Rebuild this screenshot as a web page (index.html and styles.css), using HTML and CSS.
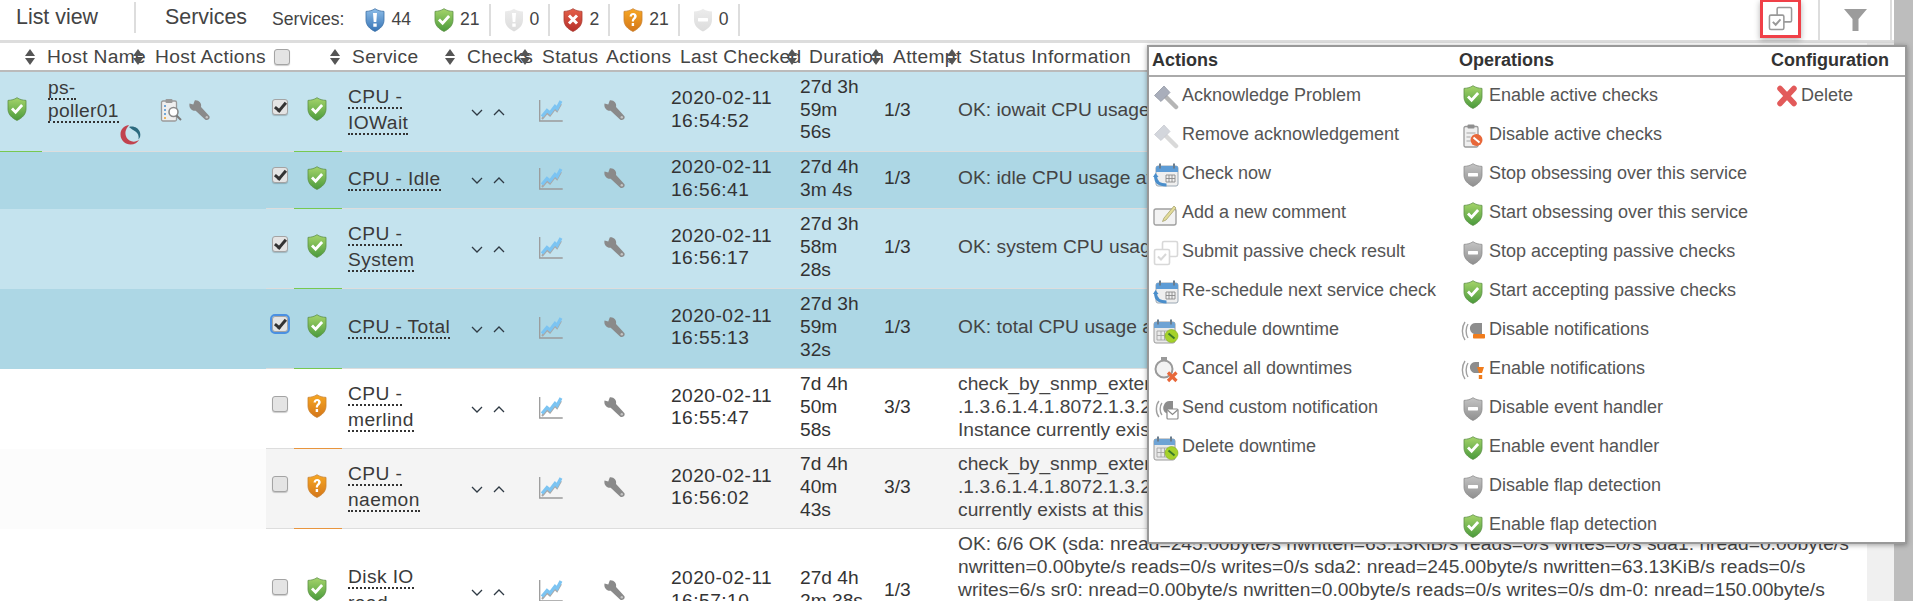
FILE: index.html
```html
<!DOCTYPE html>
<html>
<head>
  <meta charset="UTF-8">
  <title>List view - Services</title>
  <link rel="stylesheet" href="styles.css">
</head>
<body>
  <!-- shared icons -->
  <svg class="defs" aria-hidden="true">
    <defs>
      <linearGradient id="g-green" x1="0" y1="0" x2="0" y2="1"><stop offset="0" stop-color="#a5d46a"/><stop offset="1" stop-color="#4a9a3c"/></linearGradient>
      <linearGradient id="g-blue" x1="0" y1="0" x2="0" y2="1"><stop offset="0" stop-color="#8dbde8"/><stop offset="1" stop-color="#3673b5"/></linearGradient>
      <linearGradient id="g-red" x1="0" y1="0" x2="0" y2="1"><stop offset="0" stop-color="#e5604a"/><stop offset="1" stop-color="#b62f2a"/></linearGradient>
      <linearGradient id="g-orange" x1="0" y1="0" x2="0" y2="1"><stop offset="0" stop-color="#f7a823"/><stop offset="1" stop-color="#d4761a"/></linearGradient>
      <linearGradient id="g-grey" x1="0" y1="0" x2="0" y2="1"><stop offset="0" stop-color="#c4c4c4"/><stop offset="1" stop-color="#8f8f8f"/></linearGradient>
      <linearGradient id="g-pale" x1="0" y1="0" x2="0" y2="1"><stop offset="0" stop-color="#ececec"/><stop offset="1" stop-color="#dcdcdc"/></linearGradient>
    </defs>
    <symbol id="s-green" viewBox="0 0 20 24">
      <path d="M10 .7C7.500 2.500 4.500 3.200 1 3.400V12c0 5 3.500 9 9 11.400 5.500-2.400 9-6.400 9-11.400V3.400C15.500 3.200 12.500 2.500 10 .7z" fill="url(#g-green)" stroke="#5c8f44" stroke-width=".8"/>
      <path d="M5 11.500l3.600 3.700 6.500-7.200" fill="none" stroke="#fff" stroke-width="2.800"/>
    </symbol>
    <symbol id="s-blue" viewBox="0 0 20 24">
      <path d="M10 .7C7.500 2.500 4.500 3.200 1 3.400V12c0 5 3.500 9 9 11.400 5.500-2.400 9-6.400 9-11.400V3.400C15.500 3.200 12.500 2.500 10 .7z" fill="url(#g-blue)" stroke="#3a6ea5" stroke-width=".8"/>
      <path d="M8 5h4l-.7 9H8.700zM8.300 15.500h3.400v3.200H8.300z" fill="#fff"/>
    </symbol>
    <symbol id="s-ghost" viewBox="0 0 20 24">
      <path d="M10 .7C7.500 2.500 4.500 3.200 1 3.400V12c0 5 3.500 9 9 11.400 5.500-2.400 9-6.400 9-11.400V3.400C15.500 3.200 12.500 2.500 10 .7z" fill="url(#g-pale)"/>
      <path d="M8 5h4l-.7 9H8.700zM8.300 15.500h3.400v3.200H8.300z" fill="#fff"/>
    </symbol>
    <symbol id="s-red" viewBox="0 0 20 24">
      <path d="M10 .7C7.500 2.500 4.500 3.200 1 3.400V12c0 5 3.500 9 9 11.400 5.500-2.400 9-6.400 9-11.400V3.400C15.500 3.200 12.500 2.500 10 .7z" fill="url(#g-red)" stroke="#a83a30" stroke-width=".8"/>
      <path d="M6 7.500l8 8M14 7.500l-8 8" fill="none" stroke="#fff" stroke-width="3"/>
    </symbol>
    <symbol id="s-orange" viewBox="0 0 20 24">
      <path d="M10 .7C7.500 2.500 4.500 3.200 1 3.400V12c0 5 3.500 9 9 11.400 5.500-2.400 9-6.400 9-11.400V3.400C15.500 3.200 12.500 2.500 10 .7z" fill="url(#g-orange)" stroke="#c9812e" stroke-width=".8"/>
      <path d="M6.500 8.500C6.800 6 8.500 5 10.200 5c2.200 0 3.500 1.400 3.500 3.200 0 2.600-2.800 2.800-2.800 5.300H8.800c0-3.200 2.300-3.400 2.300-5.200 0-.7-.4-1.200-1-1.200-.7 0-1 .5-1.100 1.400zM8.700 15h2.400v3h-2.400z" fill="#fff"/>
    </symbol>
    <symbol id="s-grey" viewBox="0 0 20 24">
      <path d="M10 .7C7.500 2.500 4.500 3.200 1 3.400V12c0 5 3.500 9 9 11.400 5.500-2.400 9-6.400 9-11.400V3.400C15.500 3.200 12.500 2.500 10 .7z" fill="url(#g-grey)" stroke="#8a8a8a" stroke-width=".8"/>
      <rect x="5" y="10" width="10" height="3.400" rx=".6" fill="#fff"/>
    </symbol>
    <symbol id="s-pale" viewBox="0 0 20 24">
      <path d="M10 .7C7.500 2.500 4.500 3.200 1 3.400V12c0 5 3.500 9 9 11.400 5.500-2.400 9-6.400 9-11.400V3.400C15.500 3.200 12.500 2.500 10 .7z" fill="url(#g-pale)"/>
      <rect x="5" y="10" width="10" height="3.400" rx=".6" fill="#fff"/>
    </symbol>
    <symbol id="i-wrench" viewBox="0 0 24 24">
      <path d="M7 1.500L5.500 5.800 1.600 4.600C.6 8.600 3.600 12.600 8 12.200L17.800 21.300C19.300 22.700 22.600 21.700 22.600 19 22.600 18 22 17.400 21 16.400L13.600 8.300C14.600 4.300 11 .8 7 1.500z" fill="#8a8a8a"/>
      <circle cx="19.600" cy="19" r="1.300" fill="#c4c4c4"/>
    </symbol>
    <symbol id="i-graph" viewBox="0 0 24 23">
      <path d="M.7 1v21h23" fill="none" stroke="#9a9a9a" stroke-width="1.300"/>
      <path d="M3 20l5-6 3 2.500 5-6.500 2 2 4-7" fill="none" stroke="#a8a8a8" stroke-width="2"/>
      <path d="M3 17.500l5-6 3 2.500 5-6.500 2 2 4-7.500" fill="none" stroke="#7cc4f2" stroke-width="3.200"/>
    </symbol>
    <symbol id="i-down" viewBox="0 0 12 7"><path d="M1 1l5 5 5-5" fill="none" stroke="#2f3a44" stroke-width="1.300"/></symbol>
    <symbol id="i-up" viewBox="0 0 12 7"><path d="M1 6l5-5 5 5" fill="none" stroke="#2f3a44" stroke-width="1.300"/></symbol>
    <symbol id="i-report" viewBox="0 0 22 24">
      <rect x="1" y="3" width="15" height="20" rx="1.500" fill="#efefef" stroke="#9a9a9a" stroke-width="1.300"/>
      <rect x="5" y="1" width="7" height="4" rx="1" fill="#9a9a9a"/>
      <path d="M3.500 8h2M3.500 12h2M3.500 16h2" stroke="#4a90d0" stroke-width="1.500"/>
      <path d="M3.500 20h2" stroke="#e8a030" stroke-width="1.500"/>
      <circle cx="13" cy="14" r="4.500" fill="#fff" stroke="#8a8a8a" stroke-width="1.600"/>
      <path d="M16 17.500l4.500 4.500" stroke="#7a7a7a" stroke-width="2"/>
    </symbol>
    <symbol id="i-spinner" viewBox="0 0 21 21">
      <path d="M9 1C3 2 .5 6 .5 10.500c0 6 5 10 10 10 4 0 7-2 9-5-3 2.500-7 2.800-10 1-3.500-2-5-7-3.500-10.500C6.800 4 8 2.500 9 1z" fill="#c1434f"/>
      <path d="M9 3c4-1.500 9.500.500 11 5.500.8 3 .2 5-1.500 7 .7-3.500-.5-6.500-3-8C13.500 6 11 5 9 3z" fill="#2c6a7e"/>
    </symbol>
    <symbol id="i-hammer" viewBox="0 0 26 26">
      <path d="M11 11l12 12" stroke="#b5b5b5" stroke-width="4.500" stroke-linecap="round"/>
      <path d="M1.500 11.500L11 2l6 6.500L8 17.500z" fill="#a9aebb" stroke="#9398a5" stroke-width=".8"/>
    </symbol>
    <symbol id="i-cal-refresh" viewBox="0 0 26 26">
      <rect x="3" y="4" width="22" height="20" rx="2" fill="#efefef" stroke="#9aa7b3"/>
      <path d="M3 6a2 2 0 0 1 2-2h18a2 2 0 0 1 2 2v4H3z" fill="#5d9cd6"/>
      <path d="M7 1.500v5M21 1.500v5" stroke="#6a7d8e" stroke-width="2"/>
      <path d="M13 13h9v7h-9zM16 13v7M19 13v7M13 16.500h9" fill="none" stroke="#8a8a8a" stroke-width=".9"/>
      <path d="M2.500 14c0 6 4 9 11 9" fill="none" stroke="#4a8ecb" stroke-width="3"/>
      <path d="M0 15l2.500-4 3 4z" fill="#4a8ecb"/>
    </symbol>
    <symbol id="i-comment" viewBox="0 0 26 26">
      <rect x="1" y="8" width="22" height="16" rx="2" fill="#f3f3f3" stroke="#a0a0a0" stroke-width="1.400"/>
      <path d="M11 17l-1.500 3.500 3.500-1.500L23 7l-2-2z" fill="#e3dc9a" stroke="#a8a470" stroke-width=".8"/>
    </symbol>
    <symbol id="i-stack" viewBox="0 0 26 26">
      <rect x="9.500" y="1.500" width="15" height="15" rx="1.500" fill="none" stroke="currentColor" stroke-width="1.600"/>
      <rect x="1.500" y="9.500" width="15" height="15" rx="1.500" fill="#fff" stroke="currentColor" stroke-width="1.600"/>
      <path d="M5 16.500l3 3 5-5.500" fill="none" stroke="currentColor" stroke-width="2"/>
    </symbol>
    <symbol id="i-cal-down" viewBox="0 0 26 26">
      <rect x="1" y="4" width="21" height="21" rx="2" fill="#e9e9e9" stroke="#9a9a9a"/>
      <path d="M1 6a2 2 0 0 1 2-2h17a2 2 0 0 1 2 2v4H1z" fill="#6ea3d4"/>
      <path d="M5 1.500v5M18 1.500v5" stroke="#6a7d8e" stroke-width="2"/>
      <path d="M4 13h11v9H4zM8 13v9M11.500 13v9M4 17.500h11" fill="none" stroke="#a5a5a5" stroke-width=".9"/>
      <circle cx="18.500" cy="18" r="6.500" fill="#a5d22a" stroke="#86ad20" stroke-width=".6"/>
      <path d="M15.500 15.500l6 5" stroke="#3b7a2a" stroke-width="2"/>
    </symbol>
    <symbol id="i-watch-x" viewBox="0 0 26 26">
      <circle cx="11" cy="12" r="8.500" fill="#f3f3f3" stroke="#9a9a9a" stroke-width="2"/>
      <rect x="8" y="0" width="6" height="3" fill="#9a9a9a"/>
      <path d="M15 15.500l8.500 8.500M23.500 15.500L15 24" stroke="#e8683a" stroke-width="3.200"/>
    </symbol>
    <symbol id="i-bell-mail" viewBox="0 0 26 26">
      <path d="M6 5C2.500 9 2.500 17 6 21M9 7C6.500 10 6.500 16 9 19" fill="none" stroke="#a0a0a0" stroke-width="1.400"/>
      <path d="M11 9a6 6 0 0 1 6-4h3v13h-4a6 6 0 0 1-5-9z" fill="#8d8d8d"/>
      <rect x="14" y="13" width="11" height="10" rx="1" fill="#fff" stroke="#8a8a8a" stroke-width="1.200"/>
      <path d="M14.500 14l5 4.500 5-4.500" fill="none" stroke="#8a8a8a" stroke-width="1.200"/>
    </symbol>
    <symbol id="i-bell-off" viewBox="0 0 26 26">
      <path d="M5 4C1.500 9 1.500 17 5 22M8 6C5.500 10 5.500 16 8 20" fill="none" stroke="#a0a0a0" stroke-width="1.400"/>
      <path d="M10 9a6 6 0 0 1 6-4h6v11h-8a6 6 0 0 1-4-7z" fill="#8d8d8d"/>
      <rect x="13" y="16" width="12" height="4.500" rx=".8" fill="#f07c1c"/>
    </symbol>
    <symbol id="i-bell-on" viewBox="0 0 26 26">
      <path d="M5 4C1.500 9 1.500 17 5 22M8 6C5.500 10 5.500 16 8 20" fill="none" stroke="#a0a0a0" stroke-width="1.400"/>
      <path d="M10 9a6 6 0 0 1 6-4h3v11h-5a6 6 0 0 1-4-7z" fill="#8d8d8d"/>
      <path d="M17 10h7l-2 6h-3zM18.800 18h3.400v4h-3.400z" fill="#f07c1c"/>
    </symbol>
    <symbol id="i-clip-no" viewBox="0 0 20 24">
      <rect x="1" y="2.500" width="14" height="20.500" rx="1.500" fill="#efefef" stroke="#9a9a9a" stroke-width="1.300"/>
      <rect x="4.500" y=".5" width="7" height="4" rx="1" fill="#8f8f8f"/>
      <path d="M3.500 9h9M3.500 13h4M3.500 17h4" stroke="#a5a5a5" stroke-width="1.200"/>
      <circle cx="13.500" cy="16" r="6" fill="#e8683a"/>
      <path d="M10.500 13.500l6 5" stroke="#fff" stroke-width="2"/>
    </symbol>
    <symbol id="i-delete" viewBox="0 0 20 22">
      <path d="M3 3.500l14 15M17 3.500l-14 15" stroke="#e25a5a" stroke-width="5.500" stroke-linecap="round"/>
    </symbol>
    <symbol id="i-filter" viewBox="0 0 23 22">
      <path d="M0 0h23l-8.500 10v12h-6V10z" fill="#9c9c9c"/>
    </symbol>
  </svg>

  <div class="page">
    <div class="main">
      <div class="bar">
        <span class="bar-title">List view</span>
        <span class="bar-sub">Services</span>
        <span class="bar-label">Services:</span>
        <span class="count count-plain"><svg class="shield"><use href="#s-blue"/></svg>44</span>
        <span class="count"><svg class="shield"><use href="#s-green"/></svg>21</span>
        <span class="count"><svg class="shield"><use href="#s-ghost"/></svg>0</span>
        <span class="count"><svg class="shield"><use href="#s-red"/></svg>2</span>
        <span class="count"><svg class="shield"><use href="#s-orange"/></svg>21</span>
        <span class="count"><svg class="shield"><use href="#s-pale"/></svg>0</span>
        <div class="tools">
          <div class="bulk-btn"><svg class="bulk-icon"><use href="#i-stack"/></svg></div>
          <div class="filter-btn"><svg class="filter-icon"><use href="#i-filter"/></svg></div>
        </div>
      </div>

      <div class="list">
        <table class="services">
          <colgroup>
            <col class="c-state"><col class="c-host"><col class="c-hostact"><col class="c-sel"><col class="c-svcstate"><col class="c-svc"><col class="c-checks"><col class="c-status"><col class="c-act"><col class="c-last"><col class="c-dur"><col class="c-att"><col class="c-info">
          </colgroup>
          <thead>
            <tr>
              <th></th>
              <th class="th-5"><span class="sort">Host Name</span></th>
              <th class="th-5"><span class="sort">Host Actions</span></th>
              <th class="th-sel"><input type="checkbox" class="cb"></th>
              <th></th>
              <th class="th-10"><span class="sort">Service</span></th>
              <th class="th-7"><span class="sort">Checks</span></th>
              <th class="th-12"><span class="sort">Status</span></th>
              <th class="th-11">Actions</th>
              <th class="th-15">Last Checked</th>
              <th class="th-14"><span class="sort">Duration</span></th>
              <th class="th-13"><span class="sort">Attempt</span></th>
              <th class="th-19"><span class="sort">Status Information</span></th>
            </tr>
          </thead>
          <tbody>
            <tr class="sel-odd">
              <td class="state ok"><svg class="shield"><use href="#s-green"/></svg></td>
              <td class="host"><a class="link">ps-<br>poller01</a><svg class="spinner"><use href="#i-spinner"/></svg></td>
              <td class="hostact"><svg class="report"><use href="#i-report"/></svg><svg class="wrench"><use href="#i-wrench"/></svg></td>
              <td class="sel"><input type="checkbox" class="cb" checked></td>
              <td class="svcstate ok"><svg class="shield"><use href="#s-green"/></svg></td>
              <td class="svc"><a class="link">CPU -<br>IOWait</a></td>
              <td class="checks"><svg class="chev"><use href="#i-down"/></svg><svg class="chev"><use href="#i-up"/></svg></td>
              <td class="status"><svg class="graph"><use href="#i-graph"/></svg></td>
              <td class="act"><svg class="wrench"><use href="#i-wrench"/></svg></td>
              <td class="last">2020-02-11<br>16:54:52</td>
              <td class="dur">27d 3h<br>59m<br>56s</td>
              <td class="att">1/3</td>
              <td class="info">OK: iowait CPU usage at 0.00%</td>
            </tr>
            <tr class="sel-even">
              <td class="blank"></td><td class="blank"></td><td class="blank"></td>
              <td class="sel"><input type="checkbox" class="cb" checked></td>
              <td class="svcstate ok"><svg class="shield"><use href="#s-green"/></svg></td>
              <td class="svc"><a class="link">CPU - Idle</a></td>
              <td class="checks"><svg class="chev"><use href="#i-down"/></svg><svg class="chev"><use href="#i-up"/></svg></td>
              <td class="status"><svg class="graph"><use href="#i-graph"/></svg></td>
              <td class="act"><svg class="wrench"><use href="#i-wrench"/></svg></td>
              <td class="last">2020-02-11<br>16:56:41</td>
              <td class="dur">27d 4h<br>3m 4s</td>
              <td class="att">1/3</td>
              <td class="info">OK: idle CPU usage at 97.00%</td>
            </tr>
            <tr class="sel-odd">
              <td class="blank"></td><td class="blank"></td><td class="blank"></td>
              <td class="sel"><input type="checkbox" class="cb" checked></td>
              <td class="svcstate ok"><svg class="shield"><use href="#s-green"/></svg></td>
              <td class="svc"><a class="link">CPU -<br>System</a></td>
              <td class="checks"><svg class="chev"><use href="#i-down"/></svg><svg class="chev"><use href="#i-up"/></svg></td>
              <td class="status"><svg class="graph"><use href="#i-graph"/></svg></td>
              <td class="act"><svg class="wrench"><use href="#i-wrench"/></svg></td>
              <td class="last">2020-02-11<br>16:56:17</td>
              <td class="dur">27d 3h<br>58m<br>28s</td>
              <td class="att">1/3</td>
              <td class="info">OK: system CPU usage at 1.00%</td>
            </tr>
            <tr class="sel-even">
              <td class="blank"></td><td class="blank"></td><td class="blank"></td>
              <td class="sel"><input type="checkbox" class="cb cb-focus" checked></td>
              <td class="svcstate ok"><svg class="shield"><use href="#s-green"/></svg></td>
              <td class="svc"><a class="link">CPU - Total</a></td>
              <td class="checks"><svg class="chev"><use href="#i-down"/></svg><svg class="chev"><use href="#i-up"/></svg></td>
              <td class="status"><svg class="graph"><use href="#i-graph"/></svg></td>
              <td class="act"><svg class="wrench"><use href="#i-wrench"/></svg></td>
              <td class="last">2020-02-11<br>16:55:13</td>
              <td class="dur">27d 3h<br>59m<br>32s</td>
              <td class="att">1/3</td>
              <td class="info">OK: total CPU usage at 3.00%</td>
            </tr>
            <tr>
              <td class="blank white"></td><td class="blank white"></td><td class="blank white"></td>
              <td class="sel"><input type="checkbox" class="cb"></td>
              <td class="svcstate warn"><svg class="shield"><use href="#s-orange"/></svg></td>
              <td class="svc"><a class="link">CPU -<br>merlind</a></td>
              <td class="checks"><svg class="chev"><use href="#i-down"/></svg><svg class="chev"><use href="#i-up"/></svg></td>
              <td class="status"><svg class="graph"><use href="#i-graph"/></svg></td>
              <td class="act"><svg class="wrench"><use href="#i-wrench"/></svg></td>
              <td class="last">2020-02-11<br>16:55:47</td>
              <td class="dur">7d 4h<br>50m<br>58s</td>
              <td class="att">3/3</td>
              <td class="info">check_by_snmp_extend:<br>.1.3.6.1.4.1.8072.1.3.2.3<br>Instance currently exists</td>
            </tr>
            <tr class="grey">
              <td class="blank faint"></td><td class="blank faint"></td><td class="blank faint"></td>
              <td class="sel"><input type="checkbox" class="cb"></td>
              <td class="svcstate warn"><svg class="shield"><use href="#s-orange"/></svg></td>
              <td class="svc"><a class="link">CPU -<br>naemon</a></td>
              <td class="checks"><svg class="chev"><use href="#i-down"/></svg><svg class="chev"><use href="#i-up"/></svg></td>
              <td class="status"><svg class="graph"><use href="#i-graph"/></svg></td>
              <td class="act"><svg class="wrench"><use href="#i-wrench"/></svg></td>
              <td class="last">2020-02-11<br>16:56:02</td>
              <td class="dur">7d 4h<br>40m<br>43s</td>
              <td class="att">3/3</td>
              <td class="info">check_by_snmp_extend:<br>.1.3.6.1.4.1.8072.1.3.2.3<br>currently exists at this OID</td>
            </tr>
            <tr>
              <td class="blank white"></td><td class="blank white"></td><td class="blank white"></td>
              <td class="sel"><input type="checkbox" class="cb"></td>
              <td class="svcstate ok"><svg class="shield"><use href="#s-green"/></svg></td>
              <td class="svc"><a class="link">Disk IO<br>read</a></td>
              <td class="checks"><svg class="chev"><use href="#i-down"/></svg><svg class="chev"><use href="#i-up"/></svg></td>
              <td class="status"><svg class="graph"><use href="#i-graph"/></svg></td>
              <td class="act"><svg class="wrench"><use href="#i-wrench"/></svg></td>
              <td class="last">2020-02-11<br>16:57:10</td>
              <td class="dur">27d 4h<br>2m 38s</td>
              <td class="att">1/3</td>
              <td class="info">OK: 6/6 OK (sda: nread=245.00byte/s nwritten=63.13KiB/s reads=0/s writes=0/s sda1: nread=0.00byte/s<br>nwritten=0.00byte/s reads=0/s writes=0/s sda2: nread=245.00byte/s nwritten=63.13KiB/s reads=0/s<br>writes=6/s sr0: nread=0.00byte/s nwritten=0.00byte/s reads=0/s writes=0/s dm-0: nread=150.00byte/s<br>nwritten=63.13KiB/s reads=0/s writes=6/s<br>dm-1: nread=0.00byte/s</td>
            </tr>
          </tbody>
        </table>
      </div>
    </div>
    <div class="scroll"></div>

    <!-- bulk command menu -->
    <div class="menu">
      <div class="menu-col">
        <div class="menu-head">Actions</div>
        <div class="item"><svg class="ico"><use href="#i-hammer"/></svg>Acknowledge Problem</div>
        <div class="item"><svg class="ico faded"><use href="#i-hammer"/></svg>Remove acknowledgement</div>
        <div class="item"><svg class="ico"><use href="#i-cal-refresh"/></svg>Check now</div>
        <div class="item"><svg class="ico"><use href="#i-comment"/></svg>Add a new comment</div>
        <div class="item"><svg class="ico stack-pale"><use href="#i-stack"/></svg>Submit passive check result</div>
        <div class="item"><svg class="ico"><use href="#i-cal-refresh"/></svg>Re-schedule next service check</div>
        <div class="item"><svg class="ico"><use href="#i-cal-down"/></svg>Schedule downtime</div>
        <div class="item"><svg class="ico"><use href="#i-watch-x"/></svg>Cancel all downtimes</div>
        <div class="item"><svg class="ico"><use href="#i-bell-mail"/></svg>Send custom notification</div>
        <div class="item"><svg class="ico"><use href="#i-cal-down"/></svg>Delete downtime</div>
      </div>
      <div class="menu-col ops">
        <div class="menu-head">Operations</div>
        <div class="item"><svg class="ico-shield"><use href="#s-green"/></svg>Enable active checks</div>
        <div class="item"><svg class="ico-shield"><use href="#i-clip-no"/></svg>Disable active checks</div>
        <div class="item"><svg class="ico-shield"><use href="#s-grey"/></svg>Stop obsessing over this service</div>
        <div class="item"><svg class="ico-shield"><use href="#s-green"/></svg>Start obsessing over this service</div>
        <div class="item"><svg class="ico-shield"><use href="#s-grey"/></svg>Stop accepting passive checks</div>
        <div class="item"><svg class="ico-shield"><use href="#s-green"/></svg>Start accepting passive checks</div>
        <div class="item"><svg class="ico-bell"><use href="#i-bell-off"/></svg>Disable notifications</div>
        <div class="item"><svg class="ico-bell"><use href="#i-bell-on"/></svg>Enable notifications</div>
        <div class="item"><svg class="ico-shield"><use href="#s-grey"/></svg>Disable event handler</div>
        <div class="item"><svg class="ico-shield"><use href="#s-green"/></svg>Enable event handler</div>
        <div class="item"><svg class="ico-shield"><use href="#s-grey"/></svg>Disable flap detection</div>
        <div class="item"><svg class="ico-shield"><use href="#s-green"/></svg>Enable flap detection</div>
      </div>
      <div class="menu-col conf">
        <div class="menu-head">Configuration</div>
        <div class="item"><svg class="ico-del"><use href="#i-delete"/></svg>Delete</div>
      </div>
    </div>
  </div>
</body>
</html>
```
FILE: styles.css
```css
html, body {
  margin: 0;
  height: 601px;
  overflow: hidden;
  background: #fff;
}
body {
  font-family: "Liberation Sans", Arial, sans-serif;
  color: #333;
}
.defs {
  position: absolute;
  width: 0;
  height: 0;
}
.page {
  position: relative;
  display: flex;
  height: 601px;
  overflow: hidden;
}
.main {
  width: 1894px;
  flex: none;
}
.scroll {
  flex: 1;
  background: #bdbdbd;
}

/* top bar */
.bar {
  display: flex;
  align-items: center;
  height: 40px;
  border-bottom: 3px solid #ddd;
  color: #444;
}
.bar-title {
  font-size: 21.4px;
  padding: 0 36px 0 16px;
  border-right: 2px solid #ddd;
  line-height: 31px;
  margin-top: -6px;
}
.bar-sub {
  font-size: 21.4px;
  margin: -6px 25px 0 29px;
}
.bar-label {
  font-size: 17.6px;
  margin: -1px 21px 0 0;
}
.count {
  display: flex;
  align-items: center;
  gap: 6px;
  height: 32px;
  font-size: 17.6px;
  padding-right: 9px;
  margin-right: 13px;
  margin-top: -1px;
  border-right: 2px solid #ddd;
}
.count-plain {
  border-right: 0;
  padding-right: 0;
  margin-right: 23px;
}
.shield {
  display: block;
  width: 20px;
  height: 24px;
  flex: none;
}
.tools {
  display: flex;
  align-self: flex-start;
  margin-left: auto;
  margin-right: 2px;
}
.bulk-btn {
  display: flex;
  align-items: center;
  justify-content: center;
  box-sizing: border-box;
  width: 41px;
  height: 38px;
  margin-right: 17px;
  border: 3px solid #f04048;
  border-top-width: 2px;
  box-shadow: 0 2px 6px rgba(0, 0, 0, .3);
  color: #999;
}
.bulk-icon {
  width: 25px;
  height: 25px;
}
.filter-btn {
  display: flex;
  align-items: center;
  justify-content: center;
  box-sizing: border-box;
  width: 74px;
  height: 40px;
  border-left: 2px solid #ddd;
  border-right: 2px solid #ddd;
}
.filter-icon {
  width: 23px;
  height: 22px;
}

/* service list */
.list {
  background: #f0f0f0;
  height: 558px;
}
.services {
  width: 1867px;
  table-layout: fixed;
  border-collapse: separate;
  border-spacing: 0;
  background: #fff;
  font-size: 19.2px;
  line-height: 22.67px;
}
.c-state { width: 42px; }
.c-host { width: 108px; }
.c-hostact { width: 116px; }
.c-sel { width: 28px; }
.c-svcstate { width: 48px; }
.c-svc { width: 118px; }
.c-checks { width: 70px; }
.c-status { width: 65px; }
.c-act { width: 70px; }
.c-last { width: 130px; }
.c-dur { width: 85px; }
.c-att { width: 70px; }
.services th {
  height: 25px;
  padding: 2px 0 0;
  text-align: left;
  font-weight: normal;
  white-space: nowrap;
  letter-spacing: .35px;
  color: #444;
  border-bottom: 2px solid #bbb;
}
.th-5 { padding-left: 5px !important; }
.th-7 { padding-left: 7px !important; }
.th-10 { padding-left: 10px !important; }
.th-11 { padding-left: 11px !important; }
.th-12 { padding-left: 12px !important; }
.th-13 { padding-left: 13px !important; }
.th-14 { padding-left: 14px !important; }
.th-15 { padding-left: 15px !important; }
.th-19 { padding-left: 19px !important; }
.th-sel { padding-left: 8px !important; }
.th-sel .cb { margin-top: -1px; }
.sort {
  position: relative;
}
.sort::before,
.sort::after {
  content: "";
  position: absolute;
  left: -22px;
  border-left: 5px solid transparent;
  border-right: 5px solid transparent;
}
.sort::before {
  top: 3px;
  border-bottom: 7px solid #555;
}
.sort::after {
  top: 12px;
  border-top: 7px solid #555;
}
.services td {
  padding: 4px 0 7px;
  vertical-align: middle;
  white-space: nowrap;
  overflow: hidden;
  border-bottom: 1px solid #ddd;
}
.sel-odd { background: #c4e3ee; }
.sel-even { background: #add7e5; }
.grey { background: #f4f4f4; }
.services td.blank { border-bottom-color: transparent; }
.services td.white { background: #fff; }
.services td.faint { background: #fcfcfc; }
.services td.state { padding-left: 7px; }
.services td.ok { border-bottom-color: #78c850; }
.services td.warn { border-bottom-color: #e8953e; }
.services td.host {
  padding-left: 6px;
  vertical-align: top;
  overflow: visible;
  line-height: 23px;
  letter-spacing: .3px;
}
.link {
  border-bottom: 2px dotted #333;
  color: #3a3a3a;
}
.spinner {
  display: block;
  width: 21px;
  height: 21px;
  margin: 2px 0 -3px 72px;
}
.services td.hostact { padding-left: 10px; }
.report {
  width: 23px;
  height: 24px;
  margin-right: 5px;
  vertical-align: middle;
}
.wrench {
  width: 23px;
  height: 23px;
  vertical-align: middle;
}
.services td.sel { padding-left: 6px; }
.cb {
  appearance: none;
  display: block;
  position: relative;
  box-sizing: border-box;
  width: 16px;
  height: 16px;
  margin: 0;
  background: #e4e4e4;
  border: 1px solid #a4a4a4;
  border-radius: 3px;
  box-shadow: 0 1px 1px rgba(0, 0, 0, .2);
}
.sel .cb { margin-top: -7px; }
.cb:checked::after {
  content: "";
  position: absolute;
  left: 4px;
  top: 0;
  width: 4px;
  height: 9px;
  border: solid #333;
  border-width: 0 3px 3px 0;
  transform: rotate(40deg);
}
.cb-focus {
  outline: 2px solid #4a90e2;
}
.state .shield,
.svcstate .shield { margin-top: -2px; }
.services td.svcstate { padding-left: 13px; }
.services td.svc {
  padding-left: 6px;
  line-height: 26px;
  letter-spacing: .4px;
}
.services td.checks { padding-left: 11px; }
.chev {
  width: 12px;
  height: 7px;
  margin-right: 10px;
}
.services td.status { padding-left: 9px; }
.graph {
  display: block;
  width: 24px;
  height: 23px;
}
.services td.act { padding-left: 8px; }
.services td.last {
  padding-left: 6px;
  letter-spacing: .45px;
}
.services td.dur { padding-left: 5px; }
.services td.att { padding-left: 4px; }
.services td.info {
  padding-left: 8px;
  color: #444;
  letter-spacing: .04px;
}

/* bulk menu, over the list */
.menu {
  position: absolute;
  left: 1147px;
  top: 45px;
  right: 6px;
  height: 499px;
  box-sizing: border-box;
  display: grid;
  grid-template-columns: 310px 312px 1fr;
  background: #fff;
  border: 2px solid #999;
  box-shadow: 0 1px 5px rgba(0, 0, 0, .35);
  font-size: 18px;
  line-height: 22px;
  color: #555;
}
.menu-head {
  height: 30px;
  padding: 2px 0 0 3px;
  box-sizing: border-box;
  border-bottom: 2px solid #aaa;
  font-weight: bold;
  color: #333;
}
.ops .menu-head,
.conf .menu-head { padding-left: 0; }
.item {
  display: flex;
  align-items: flex-start;
  box-sizing: border-box;
  height: 39px;
  padding: 7px 0 0 4px;
  white-space: nowrap;
}
.ico {
  flex: none;
  width: 26px;
  height: 26px;
  margin-right: 3px;
}
.faded { opacity: .5; }
.stack-pale {
  color: #d4d4d4;
  opacity: .9;
}
.ico-shield {
  flex: none;
  width: 20px;
  height: 24px;
  margin: 1px 6px 0 0;
}
.ico-bell {
  flex: none;
  width: 26px;
  height: 26px;
  margin-left: -3px;
  margin-right: 3px;
}
.conf .item { padding-left: 6px; }
.ico-del {
  flex: none;
  width: 20px;
  height: 22px;
  margin: 1px 4px 0 0;
}
```
